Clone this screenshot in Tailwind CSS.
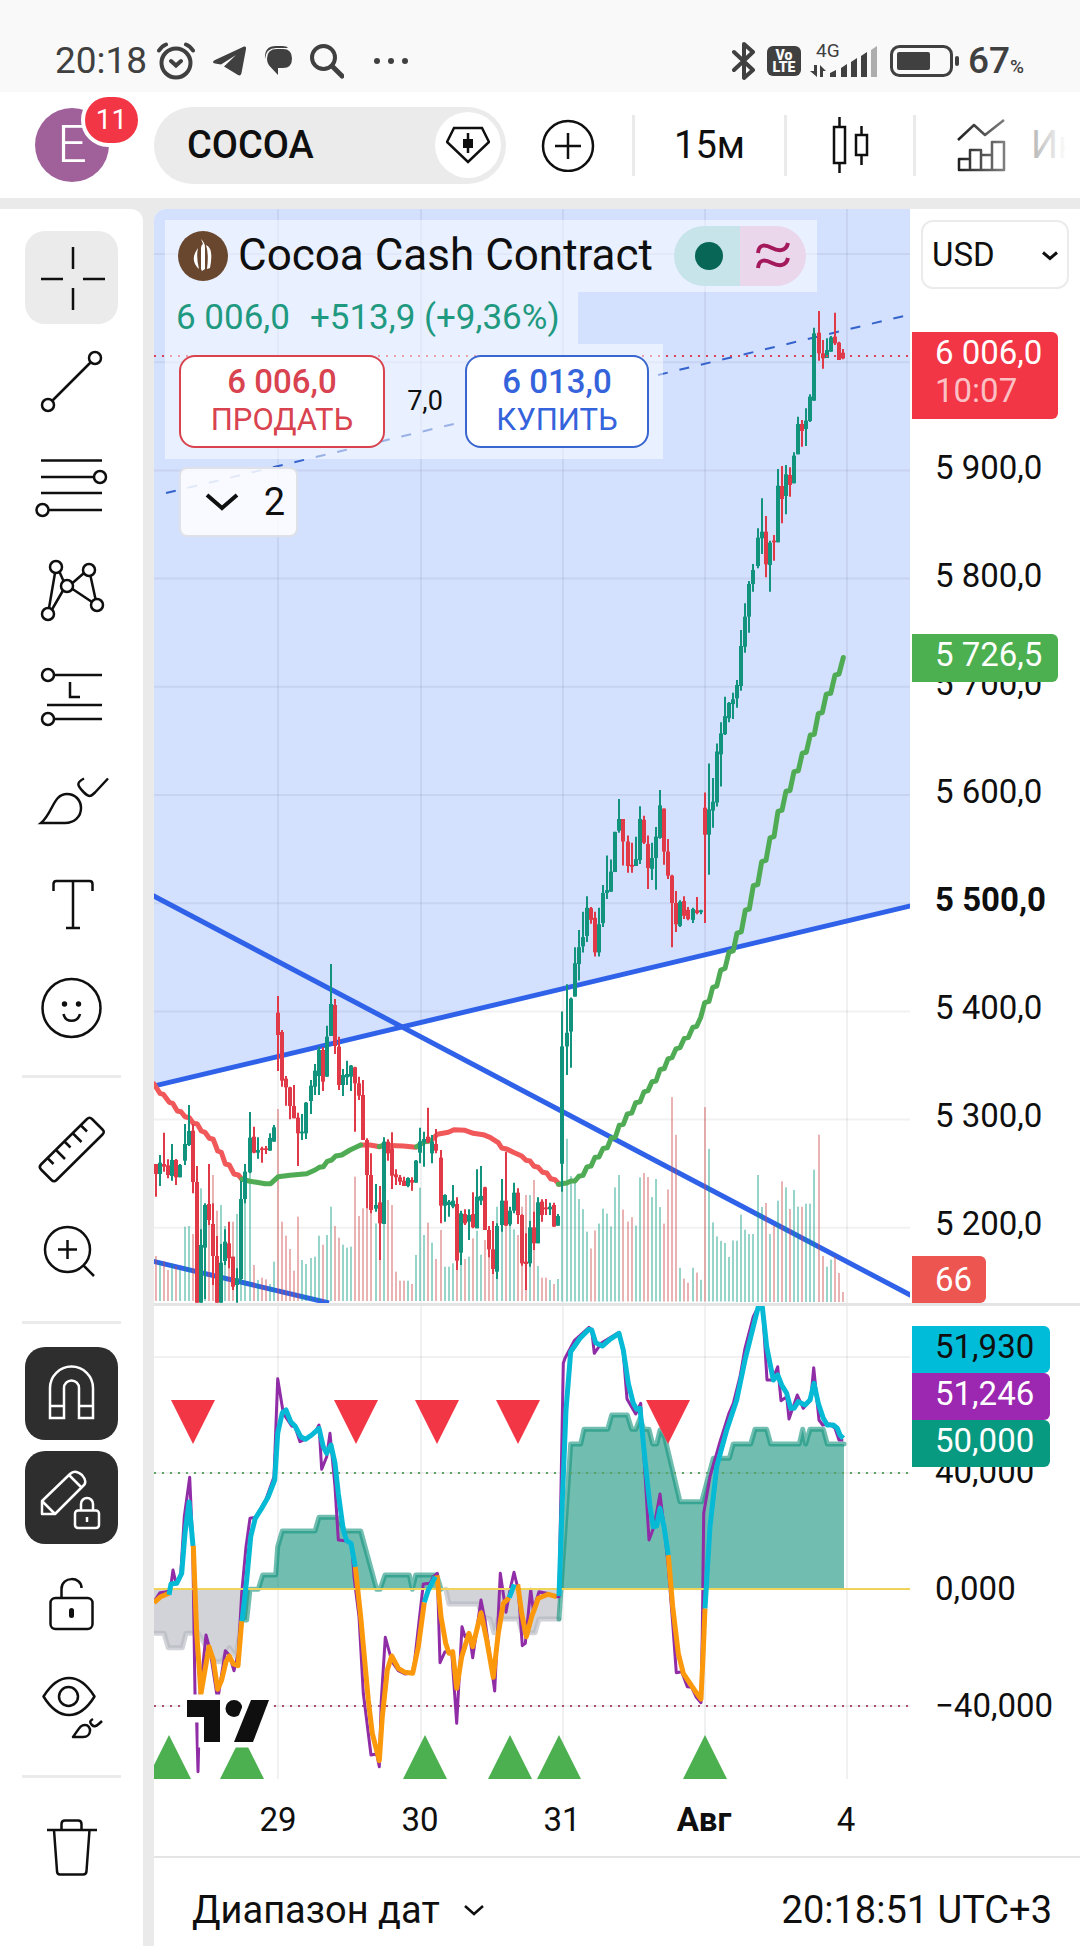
<!doctype html>
<html lang="ru">

  <head>
    <meta charset="UTF-8" />
    <meta name="viewport" content="width=device-width, initial-scale=1.0" />
    <title>COCOA 6 006,0</title>
    <script src="https://cdn.jsdelivr.net/npm/@tailwindcss/browser@4"></script>
  </head>

  <body class="min-h-screen flex flex-col bg-[#eaeaea] text-[#0f0f0f] font-['Roboto','Liberation_Sans',sans-serif] overflow-x-hidden">

    <!-- Phone status bar -->
    <div class="h-[92px] pt-[30px] pl-[55px] pr-14 flex items-center justify-between bg-[#f9f9f9] text-[#404040]">
      <div class="flex items-center gap-[18px]">
        <span class="text-[37px] leading-[60px] -mr-2">20:18</span>
        <svg class="w-[38px] h-[38px]" viewBox="0 0 38 38" fill="none" stroke="currentColor" stroke-width="4" stroke-linecap="round">
          <circle cx="19" cy="21" r="14.500" />
          <path d="M2 8.500Q5 4 9 2.500M36 8.500Q33 4 29 2.500M14 19l5 4.500 5-4.500" />
        </svg>
        <svg class="w-[33px] h-[30px]" viewBox="0 0 33 30" fill="currentColor">
          <path d="M0 16Q0 15 2 14L31 .5Q33.500 0 33 3L28.500 27Q28 30.500 25 29L11 20.500 23 9 8 18.500 2 17.500Q0 17 0 16Z" />
        </svg>
        <svg class="w-[28px] h-[30px]" viewBox="0 0 28 30" fill="currentColor">
          <path d="M13 3h6q9 0 9 9.500T19 22h-5v7L6.500 21Q3 18 3 12.500 3 3 13 3Z" />
          <path d="M1 13Q0 0 12 0h6q5 0 6 2H12Q2 2 1 13Z" />
        </svg>
        <svg class="w-[34px] h-[36px]" viewBox="0 0 34 36" fill="none" stroke="currentColor">
          <circle cx="13.500" cy="14.500" r="11.500" stroke-width="4" />
          <path d="M22 23l10 10" stroke-width="5" stroke-linecap="round" />
        </svg>
        <svg class="w-[34px] h-[8px] ml-3" viewBox="0 0 34 8" fill="currentColor">
          <circle cx="3" cy="4" r="3" /><circle cx="17" cy="4" r="3" /><circle cx="31" cy="4" r="3" />
        </svg>
      </div>
      <div class="flex items-center">
        <svg class="w-[24px] h-[40px]" viewBox="0 0 24 40" fill="none" stroke="currentColor" stroke-width="4" stroke-linejoin="round" stroke-linecap="round">
          <path d="M2 11l19 18-9 8V3l9 8L2 29" />
        </svg>
        <div class="ml-[11px] w-[34px] h-[30px] rounded-md bg-[#404040] text-[#f9f9f9] text-[14px] leading-[12px] font-black text-center pt-[3px]">Vo<br>LTE</div>
        <svg class="ml-[9px] w-[68px] h-[36px] overflow-visible" viewBox="0 0 68 36" fill="currentColor">
          <text x="6" y="14" font-size="19" font-family="Roboto">4G</text>
          <path d="M4 22h3v12L0 28h4zM10 34V22l6 6h-3v6z" />
          <path d="M20 30l6-3v7h-6zM31 25l6-4v13h-6zM41 19l6-4v19h-6zM51 13l6-4v25h-6z" />
          <path d="M61 7l6-4v31h-6z" class="text-[#adadad]" />
        </svg>
        <svg class="ml-3 w-[70px] h-[32px]" viewBox="0 0 70 32" fill="currentColor">
          <rect x="1.500" y="1.500" width="60" height="29" rx="8" fill="none" stroke="currentColor" stroke-width="3" />
          <rect x="7" y="7" width="33" height="18" rx="2" /><rect x="65" y="11" width="4" height="10" rx="2" />
        </svg>
        <span class="ml-2 text-[37px] leading-[60px] font-medium">67</span><span class="text-[19px] font-medium pt-3">%</span>
      </div>
    </div>

    <!-- Top toolbar -->
    <header class="relative h-[106px] flex items-center bg-white overflow-hidden [&>*]:shrink-0">
      <button class="relative ml-[35px] w-[74px] h-[74px] rounded-full bg-[#a0619b] text-white text-[52px] leading-[74px] font-light" aria-label="Профиль">E
        <span class="absolute left-[46px] -top-[15px] box-content w-[53px] h-[46px] border-4 border-white rounded-full bg-[#f23645] text-[28px] leading-[46px] font-normal">11</span>
      </button>
      <div class="ml-[45px] w-[352px] h-[77px] pl-[33px] pr-[5px] flex items-center justify-between rounded-full bg-[#ebebeb]">
        <button class="text-[38px] font-medium">COCOA</button>
        <button class="w-[66px] h-[66px] rounded-full bg-white flex items-center justify-center" aria-label="Инструмент">
          <svg class="w-[44px] h-[38px]" viewBox="0 0 44 38" fill="none" stroke="currentColor" stroke-width="2.500">
            <path d="M8 2h28l7 14-21 20L1 16z" /><path d="M22 7v20" /><path d="M17 13h10v9H17z" fill="currentColor" stroke="none" />
          </svg>
        </button>
      </div>
      <button class="ml-[35px] w-[54px] h-[54px]" aria-label="Сравнить">
        <svg viewBox="0 0 54 54" fill="none" stroke="currentColor" stroke-width="2.500"><circle cx="27" cy="28" r="25" /><path d="M14 28h26M27 15v26" /></svg>
      </button>
      <div class="ml-[37px] w-[3px] h-[61px] bg-[#eaeaea]"></div>
      <button class="w-[149px] text-[38px]">15м</button>
      <div class="w-[3px] h-[61px] bg-[#eaeaea]"></div>
      <button class="ml-[45px] w-[38px] h-[56px]" aria-label="Свечи">
        <svg viewBox="0 0 38 56" fill="none" stroke="currentColor" stroke-width="2.500"><path d="M2 10h11v36H2zM7.500 0v10M7.500 46v10M24 18h11v20H24zM29.500 9v9M29.500 38v10" /></svg>
      </button>
      <div class="ml-[43px] w-[3px] h-[61px] bg-[#eaeaea]"></div>
      <button class="ml-[41px] flex items-center gap-[25px] text-[38px] whitespace-nowrap">
        <svg class="w-[49px] h-[54px]" viewBox="0 0 49 54" fill="none" stroke="currentColor" stroke-width="2.500" stroke-linejoin="round">
          <path d="M1 22L17 7l11 10L47 2M2 52V41h11v11zM13 52V32h11v20zM24 52V37h11v15zM35 52V24h12v28z" />
        </svg>
        Индикаторы
      </button>
      <div class="absolute inset-y-0 right-0 w-[130px] bg-linear-to-r from-white/0 to-white to-90%"></div>
    </header>

    <div class="flex-1 flex gap-[11px] pt-[11px]">

      <!-- Drawing tools -->
      <nav id="tools" class="w-[143px] shrink-0 pt-[22px] flex flex-col items-center gap-[11px] rounded-tr-xl bg-white [&>button]:w-[93px] [&>button]:h-[93px] [&>button]:rounded-[20px] [&>hr]:w-[99px] [&>hr]:my-3 [&>hr]:border-t-0 [&>hr]:h-[3px] [&>hr]:bg-[#ebebeb]">
        <button class="bg-[#ebebeb]" aria-label="Перекрестие">
          <svg viewBox="0 0 93 93" fill="none" stroke="currentColor" stroke-width="2.500"><path d="M16 48h22M58 48h22M48 16v22M48 57v22" /></svg>
        </button>
        <button aria-label="Линия тренда">
          <svg viewBox="0 0 93 93" fill="none" stroke="currentColor" stroke-width="2.500"><circle cx="70" cy="23" r="6" /><circle cx="23" cy="70" r="6" /><path d="M27.500 65.500l38-38" /></svg>
        </button>
        <button aria-label="Фибоначчи">
          <svg viewBox="0 0 93 93" fill="none" stroke="currentColor" stroke-width="2.500"><path d="M16 21.500h61M16 38h53M16 54h61M24 71h53" /><circle cx="75" cy="38" r="6" /><circle cx="17.500" cy="71" r="6" /></svg>
        </button>
        <button aria-label="Паттерны">
          <svg viewBox="0 0 93 93" fill="none" stroke="currentColor" stroke-width="2.500"><circle cx="31" cy="24" r="6" /><circle cx="64" cy="27" r="6" /><circle cx="42" cy="43" r="6" /><circle cx="72" cy="62" r="6" /><circle cx="23" cy="71" r="6" /><path d="M30 30l-6 35M34.500 29l4 9M38 47.500L27 66.500M47.500 40L59 30M65.500 33l5 23M47.500 46L67 59" /></svg>
        </button>
        <button aria-label="Прогноз">
          <svg viewBox="0 0 93 93" fill="none" stroke="currentColor" stroke-width="2.500"><circle cx="23" cy="28" r="6" /><circle cx="23" cy="72" r="6" /><path d="M29 28h48M29 72h48M22 58h55M45 35v15h10" /></svg>
        </button>
        <button aria-label="Кисть">
          <svg viewBox="0 0 93 93" fill="none" stroke="currentColor" stroke-width="2.500"><path d="M16 72C28 62 28 43 42 43c8 0 14 6 14 14 0 9-7 15-16 15zM59 27.500c-8 4-7 7 0 14 5 5 7 4 11 0L83 27.500" /></svg>
        </button>
        <button aria-label="Текст">
          <svg viewBox="0 0 93 93" fill="none" stroke="currentColor" stroke-width="2.500"><path d="M28.500 36v-7q0-3 3-3h33q3 0 3 3v7M48 26v47M41 73h14" /></svg>
        </button>
        <button aria-label="Смайлы">
          <svg viewBox="0 0 93 93" fill="none" stroke="currentColor" stroke-width="2.500"><circle cx="46.500" cy="49" r="29" /><path d="M38.500 55c2 9 14 9 16.500 0" /><circle cx="39.500" cy="45" r="2.700" fill="currentColor" stroke="none" /><circle cx="53.500" cy="45" r="2.700" fill="currentColor" stroke="none" /></svg>
        </button>
        <hr />
        <button aria-label="Линейка">
          <svg viewBox="0 0 93 93" fill="none" stroke="currentColor" stroke-width="2.500" stroke-linejoin="round"><path d="M62 18q2.500-2.500 5 0l10.500 10.500q2.500 2.500 0 5L31.500 79q-2.500 2.500-5 0L16 68.500q-2.500-2.500 0-5zM22.500 57l6 6M31 49l9 9M39.500 40.500l6 6M47.500 32l9 9M56 24.500l6 6" /></svg>
        </button>
        <button aria-label="Увеличить">
          <svg viewBox="0 0 93 93" fill="none" stroke="currentColor" stroke-width="2.500"><circle cx="42.500" cy="44.500" r="22.500" /><path d="M33 44.500h19M42.500 35v19M58 60l11 11" /></svg>
        </button>
        <hr />
        <button class="bg-[#2e2e2e] text-white" aria-label="Магнит">
          <svg viewBox="0 0 93 93" fill="none" stroke="currentColor" stroke-width="2.500"><path d="M25 71V41a21.500 21.500 0 0143 0v30H54V41a7.500 7.500 0 00-15 0v30zM25 59h14M54 59h14" /></svg>
        </button>
        <button class="bg-[#2e2e2e] text-white" aria-label="Режим рисования">
          <svg viewBox="0 0 93 93" fill="none" stroke="currentColor" stroke-width="2.500" stroke-linejoin="round"><path d="M17 63V50l28-27q5-5 12 1 6 7 1 11L30 63zM17 50l13 13M44 24l12.500 12.500" /><rect x="50" y="59.500" width="24" height="17.500" rx="3" /><path d="M56 59v-6a6 6 0 0112 0v6M62 66v5" /></svg>
        </button>
        <button aria-label="Заблокировать">
          <svg viewBox="0 0 93 93" fill="none" stroke="currentColor" stroke-width="2.500"><rect x="25.500" y="43" width="42" height="31" rx="5" /><path d="M36.500 43v-9c0-13 20-13 20-1" /><rect x="44" y="53" width="5" height="10" rx="2.500" fill="currentColor" stroke="none" /></svg>
        </button>
        <button aria-label="Скрыть">
          <svg viewBox="0 0 93 93" fill="none" stroke="currentColor" stroke-width="2.500" stroke-linejoin="round"><path d="M18.500 37.500Q30 19 44 19t25.500 18.500Q58 56 44 56T18.500 37.500z" /><circle cx="43.500" cy="37.500" r="9.500" /><path d="M48 78c6-8 7-12 12-12 7 0 7 12-2 12zM68 60c-4 2-3 4-1 6s4 2 10-4" /></svg>
        </button>
        <hr />
        <button aria-label="Удалить">
          <svg viewBox="0 0 93 93" fill="none" stroke="currentColor" stroke-width="2.500"><path d="M22 29h50M36.500 29v-6q0-3.500 3.500-3.500h13q3.500 0 3.500 3.500v6M29 29l3 41q0 3.500 3 3.500h23q3.500 0 3.500-3.500l3-41" /></svg>
        </button>
      </nav>

      <main class="flex-1 min-w-0 flex flex-col rounded-tl-xl bg-white overflow-hidden">
        <div class="flex">

          <!-- Plot area -->
          <div class="relative flex-1 min-w-0">
            <svg id="chart" class="block w-full h-[1577px]" viewBox="0 0 756 1577" preserveAspectRatio="xMaxYMin slice"></svg>

            <!-- Legend -->
            <div class="absolute left-[11px] top-[11px] flex flex-col items-start [&>div]:bg-white/50">
              <div class="h-[72px] pl-[13px] pr-[11px] flex items-center">
                <svg class="w-[50px] h-[50px]" viewBox="0 0 50 50">
                  <circle cx="25" cy="25" r="25" fill="#69472f" />
                  <path d="M23 8q4 4 4 8v22l-3 2-1-2V18q0-4 2-5zM20 17q-2 9 1 21-10-9-1-21zM28 14q8 3 4 23l-3 1q2-15-1-24z" fill="#fff" />
                </svg>
                <h1 class="ml-[10px] pb-[2px] text-[44px] leading-[60px] whitespace-nowrap">Cocoa Cash Contract</h1>
                <div class="ml-[21px] flex h-[60px] rounded-full overflow-hidden">
                  <span class="w-[66px] bg-[#c7e4ea] flex items-center justify-center pl-1"><i class="w-7 h-7 rounded-full bg-[#076656]"></i></span>
                  <span class="w-[66px] bg-[#ead7ec] flex items-center justify-center">
                    <svg class="w-[34px] h-[28px]" viewBox="0 0 34 28" fill="none" stroke="#a3195b" stroke-width="4"><path d="M2 11C3 1 10 3 16 6s14 4 16-5M2 26C3 16 10 18 16 21s14 4 16-5" /></svg>
                  </span>
                </div>
              </div>
              <div class="h-[52px] pl-[11px] pr-[18px] flex items-center gap-[20px] text-[35px] text-[#1f9a80] whitespace-nowrap">
                <span>6 006,0</span><span>+513,9 (+9,36%)</span>
              </div>
              <div class="h-[115px] pl-[14px] pr-[14px] pt-[11px] flex items-start">
                <button class="w-[206px] h-[93px] pb-[2px] border-2 border-[#d8434f] rounded-2xl bg-white text-[#d8434f] leading-[38px]">
                  <b class="block text-[33px] font-medium">6 006,0</b><span class="block text-[31px]">ПРОДАТЬ</span>
                </button>
                <span class="w-[80px] leading-[93px] text-center text-[27px]">7,0</span>
                <button class="w-[184px] h-[93px] pb-[2px] border-2 border-[#3a66cf] rounded-2xl bg-white text-[#3563dc] leading-[38px]">
                  <b class="block text-[33px] font-medium">6 013,0</b><span class="block text-[31px]">КУПИТЬ</span>
                </button>
              </div>
              <button class="ml-[14px] mt-[8px] w-[119px] h-[70px] pl-[24px] pr-[11px] flex items-center justify-between border-2 border-[#dfe1e8] rounded-lg bg-white/85 text-[38px]">
                <svg class="w-[34px] h-[20px]" viewBox="0 0 34 20" fill="none" stroke="currentColor" stroke-width="4"><path d="M2 3l15 13L32 3" /></svg>
                2
              </button>
            </div>
          </div>

          <!-- Price scale -->
          <div class="w-[170px] shrink-0 text-[33px] leading-[48px] whitespace-nowrap">
            <div class="relative h-[1097px] border-b-[3px] border-[#e4e4e4] pt-[11px]">
              <div class="relative mx-[11px]">
                <select class="w-full h-[69px] pl-[9px] border-2 border-[#ebebeb] rounded-xl bg-white appearance-none" aria-label="Валюта"><option>USD</option></select>
                <svg class="absolute right-[11px] top-[31px] w-[16px] h-[10px]" viewBox="0 0 16 10" fill="none" stroke="currentColor" stroke-width="3"><path d="M1 1.500l7 6 7-6" /></svg>
              </div>
              <ul class="pt-[125px] pl-[25px] [&>li]:leading-[108px]">
                <li>5 900,0</li>
                <li>5 800,0</li>
                <li>5 700,0</li>
                <li>5 600,0</li>
                <li class="font-bold">5 500,0</li>
                <li>5 400,0</li>
                <li>5 300,0</li>
                <li>5 200,0</li>
              </ul>
              <div class="absolute left-[2px] top-[123px] w-[146px] h-[87px] pl-[23px] pt-[2px] leading-[38px] rounded-r-md bg-[#f23645] text-white">6 006,0<br><span class="text-white/70">10:07</span></div>
              <div class="absolute left-[2px] top-[425px] w-[146px] h-[48px] pl-[23px] leading-[42px] rounded-r-md bg-[#4caf50] text-white">5 726,5</div>
              <div class="absolute left-[2px] bottom-0 w-[74px] h-[47px] pl-[23px] rounded-r-md bg-[#ec5550] text-white">66</div>
            </div>
            <div class="relative">
              <ul class="pt-[107px] pl-[25px] [&>li]:leading-[117px]">
                <li>40,000</li>
                <li>0,000</li>
                <li>−40,000</li>
              </ul>
              <div class="absolute left-[2px] top-[20px] w-[138px] leading-[42px] [&>div]:h-[47px] [&>div]:pl-[23px] [&>div]:rounded-r-md text-white">
                <div class="bg-[#00bcd9] text-[#0f0f0f]">51,930</div>
                <div class="bg-[#9c27b0]">51,246</div>
                <div class="bg-[#089981]">50,000</div>
              </div>
            </div>
          </div>
        </div>

        <!-- Time scale -->
        <div class="h-[72px] pl-[53px] flex text-[33px] leading-[68px] text-center overflow-hidden border-b-2 border-[#e4e4e4] [&>span]:w-[142px]">
          <span>29</span><span>30</span><span>31</span><span class="font-bold">Авг</span><span>4</span>
        </div>
        <footer class="h-[88px] pt-4 pl-[38px] pr-7 flex items-center justify-between text-[38px] whitespace-nowrap">
          <button class="flex items-center gap-6">Диапазон дат
            <svg class="w-[20px] h-[12px]" viewBox="0 0 20 12" fill="none" stroke="currentColor" stroke-width="2.500"><path d="M1 2l9 8 9-8" /></svg>
          </button>
          <button>20:18:51 UTC+3</button>
        </footer>
      </main>
    </div>

    <script>
      const UP = '#12937d', DOWN = '#e03a49';
      const TOP = 209;
      const out = [];
      const barX = i => 124 + (i - 30) * 4.064;
      const add = s => out.push(s);

      // candles: direction, high, body top, body bottom, low, volume top
      // each block has its own vertical origin and scale
      const blocks = [
        { oy: 940, k: 3, base: 1083, bars: `
          r 672 672 702 770 948|g 645 668 702 738 968|r 578 672 680 695 963|r 658 676 705 715 990|g 612 660 708 722 970
          r 657 660 712 735 978|g 672 675 712 712 988|g 552 612 662 675 860|g 495 573 615 618 858|r 552 572 726 760 882
          r 678 726 1088 1088 760|g 868 915 1088 1088 745|g 790 795 923 1077 800|r 672 792 840 855 780|r 790 852 948 1035 705
          r 888 948 1088 1088 812|g 912 968 1088 1088 795|g 868 905 963 975 858|r 845 910 955 985 870|r 950 950 1040 1050 845
          g 985 1015 1035 1088 822|g 722 777 1017 1022 750|g 672 695 777 790 780|g 516 593 697 700 645|r 560 590 638 640 975
          g 592 630 638 656 1020|r 620 625 630 668 1013|r 618 625 630 642 1018|g 580 594 632 632 1032|g 555 562 605 605 965
          r 168 218 285 393 507|r 270 276 422 440 845|r 408 416 442 497 887|r 440 442 498 538 927|r 435 498 535 535 992
          r 518 533 580 678 830|g 522 575 580 600 960|g 486 488 580 597 972|g 420 437 483 522 954|g 372 392 440 465 950
          g 320 330 408 465 887|r 322 330 425 453 914|g 257 290 410 410 885|g 72 192 288 288 800|r 177 195 318 342 858
          r 290 320 435 450 893|g 387 405 435 468 914|g 362 402 412 435 923|g 375 377 410 453 920|r 380 382 430 575 710
          r 410 430 467 480 828|r 420 465 600 600 805|r 595 600 705 805 780|r 640 705 810 820 815|g 732 795 806 815 850
          r 738 787 850 960 790|g 592 605 852 852 780|r 598 605 640 662 780|r 577 625 707 747 795|r 688 703 712 735 995
          r 705 712 725 735 1022|r 710 722 738 738 1022|g 712 714 738 742 1022|r 712 720 728 752 1032|g 660 662 728 728 945
          g 563 605 638 670 743|g 575 597 607 680 885|r 503 590 607 610 848|g 585 605 640 670 908|r 567 612 632 640 957
          r 630 653 797 850 870|g 763 765 797 845 980|g 780 785 795 830 980|g 735 782 800 805 970|r 772 792 962 990 960
          g 812 820 938 975 945|r 808 822 850 855 957|g 808 825 845 900 950|r 757 822 862 865 895|g 688 770 865 865 872
          g 678 768 782 795 944|r 740 742 870 870 900|r 858 870 928 952 860|r 843 928 987 1002 843|g 850 858 995 1017 800
          g 717 782 855 875 850|r 635 782 857 857 840|g 800 812 853 858 855|g 728 758 812 820 868|r 745 758 825 852 885
          r 823 825 970 977 800|r 880 965 972 1050 765|g 843 862 970 980 765|r 815 862 910 930 720|g 772 787 910 910 978
          r 778 785 825 845 1013|r 777 802 808 825 1013|g 788 800 808 825 1020|r 788 795 860 860 1032|g 822 828 857 857 1017` },
        { oy: 680, k: 2.489, base: 1547, bars: `
          g 825 912 1204 1274 1100|g 757 878 912 983 1142|g 790 793 875 965 1235|g 665 705 788 788 1245|g 622 665 707 748 1292
          g 577 640 663 678 1317|g 538 567 637 652 1373|r 565 568 597 607 1415|r 577 592 678 688 1370|g 567 608 678 688 1353
          g 510 530 605 615 1316|g 437 523 530 545 1328|g 447 477 527 527 1360|g 378 378 478 478 1263|g 296 346 375 380 1232
          r 346 346 402 462 1318|r 387 402 463 480 1348|r 405 460 465 480 1337|g 390 446 463 463 1358|g 314 346 448 458 1238
          r 338 348 405 408 1227|r 387 408 468 520 1237|g 405 443 470 498 1287|g 366 390 443 522 1242|g 274 312 393 395 1312
          r 320 320 427 460 1353|r 396 427 487 495 1268|r 485 487 555 665 1038|r 525 555 608 627 1132|g 548 552 612 615 1463
          r 538 550 587 595 1490|r 565 572 595 598 1500|g 567 570 597 605 1463|r 540 573 580 583 1475|g 572 573 578 583 1493
          r 280 318 385 605 1063|g 208 322 385 485 1167|g 244 303 325 368 1350|g 158 178 305 315 1385|g 105 133 185 265 1396
          g 42 90 135 137 1401|g 55 57 95 105 1436|g 32 48 60 97 1395` },
        { oy: 280, k: 3, base: 3066, bars: `
          g 1200 1215 1255 1283 2882|g 1050 1098 1218 1232 2804|g 970 1010 1100 1118 2849|g 903 912 1010 1058 2862|g 852 870 912 935 2862
          g 745 773 858 865 2685|g 655 755 775 822 2781|r 708 755 853 892 2769|g 782 788 855 935 2862|r 765 782 787 842 2837
          g 567 617 787 787 2762|r 558 618 657 730 2704|g 555 583 648 703 2722|r 562 585 615 650 2787|g 517 527 610 610 2730
          g 410 432 523 523 2780|r 420 432 453 500 2780|g 385 422 447 498 2771|g 343 350 423 426 2771|g 143 160 362 362 2669
          r 93 158 220 242 2564|r 180 220 235 266 2928|g 175 210 234 234 2960|g 168 172 215 215 2939|r 98 170 190 195 2930
          r 185 188 240 240 2979|r 207 218 235 238 3036` }
      ];

      // shaded zone and grid
      add('<path d="M0 0H756V697L0 877Z" fill="#d3e0fe"/>');
      add('<g stroke="#000" stroke-opacity=".055" stroke-width="2">');
      for (let y = 45; y < 1090; y += 108.2) add(`<path d="M0 ${y}H756"/>`);
      [1148, 1264, 1497].forEach(y => add(`<path d="M0 ${y}H756"/>`));
      [124, 267, 409, 551, 693].forEach(x => add(`<path d="M${x} 0V1570"/>`));
      add('</g>');

      // trend lines
      add('<clipPath id="price"><path d="M0 0H756V1094H0Z"/></clipPath><clipPath id="osc"><path d="M0 1097H756V1577H0Z"/></clipPath>');
      add('<g clip-path="url(#price)"><g stroke="#2f62e8" stroke-width="5"><path d="M-2 686L758 1087M-2 877.500L758 696.500M-2 1052L175 1094"/></g>');
      add('<path d="M12 284L754 106" stroke="#3563cc" stroke-width="2" stroke-dasharray="10 12"/>');

      const candles = [];
      let i = 0;
      for (const b of blocks) {
        const Y = v => b.oy - TOP + v / b.k;
        for (const row of b.bars.trim().split(/\||\n/)) {
          const [d, h, t, bt, l, v] = row.trim().split(' ');
          const c = d === 'g' ? UP : DOWN, x = Math.round(barX(i++));
          add(`<rect x="${x - 1}" y="${Y(+v)}" width="2" height="${Y(b.base) - Y(+v)}" fill="${d === 'g' ? '#089981' : '#cc4a4a'}" opacity=".42"/>`);
          candles.push(`<path d="M${x} ${Y(+h)}V${Y(+l)}" stroke="${c}" stroke-width="2"/><path d="M${x} ${Y(+t)}V${Math.max(Y(+bt), Y(+t) + 1.5)}" stroke="${c}" stroke-width="4"/>`);
        }
      }

      // polyline from "x,y x,y" with its own origin and scale
      const map = (s, ox, oy, kx, ky) => s.trim().split(/\s+/).map(p => {
        const [x, y] = p.split(',').map(Number);
        return (ox + x / kx).toFixed(1) + ',' + (oy + y / ky).toFixed(1);
      }).join(' ');
      const line = (pts, color, w, extra = '') => add(`<polyline points="${pts}" fill="none" stroke="${color}" stroke-width="${w}" stroke-linejoin="round" ${extra}/>`);

      // moving average
      const ma = (s, c) => line(map(s, -4, 731, 3, 3), c, 5, 'stroke-linecap="round"');
      const RED = '#f0585a', GREEN = '#4fac54';
      ma('12,432 30,460 40,463 58,487 68,490 82,513 93,515 105,530 118,533 130,550 142,552 154,573 165,577 178,595 190,598 203,633 214,637 226,672 238,675 252,702 265,705 276,718', RED);
      ma('632,615 660,615 690,620', RED);
      ma('700,616 760,618 798,622', RED);
      ma('845,600 862,583 895,577 912,569 945,571 970,580 1000,584 1020,592 1045,608 1055,624 1070,627 1090,637 1115,648 1128,661 1140,663 1152,679 1165,682 1178,697 1190,699 1202,716 1215,719 1228,733', RED);
      ma('276,718 300,724 320,727 345,731 362,731 385,710 420,706 470,701 495,690 508,682 520,680 532,664 545,660 557,648 575,645 600,630 632,615', GREEN);
      ma('688,620 697,617', GREEN);
      ma('800,620 825,605 838,603', GREEN);
      line(map(`55,1255 80,1252 93,1247 105,1247 117,1235 129,1233 141,1212 153,1210 165,1188 177,1187 189,1166 202,1164 214,1140 226,1138
        238,1108 250,1106 262,1080 275,1078 287,1052 300,1050 312,1025 324,1022 336,1000 348,998 360,970 373,967 384,943 396,940 408,918
        420,915 433,892 445,890 458,865 470,862 482,840 494,803 507,800 518,765 530,762 542,722 555,718 567,677 580,674 591,630 604,627
        616,573 628,570 640,512 653,509 665,452 678,449 690,393 702,390 714,327 726,324 738,277 750,275 762,228 775,226 787,182 799,180
        811,137 823,135 835,84 847,81 859,35 872,33 885,-12 897,-15 910,-56`, 386, 471, 3, 2.489), GREEN, 5, 'stroke-linecap="round"');

      candles.forEach(add);
      add('<path d="M0 147H756" stroke="#d9425a" stroke-width="2" stroke-dasharray="2 6"/></g>');

      // oscillator; left and right halves share one vertical scale
      const L = s => map(s, -4, 1091, 3, 3), R = s => map(s, 386, 1091, 3, 3);
      const area = (pts, color, op) => {
        const a = pts.split(' '), x0 = a[0].split(',')[0], x1 = a[a.length - 1].split(',')[0];
        add(`<polygon points="${x0},1380 ${pts} ${x1},1380" fill="${color}" opacity="${op}"/>`);
        line(pts, color, 5, `opacity="${op}" stroke-linecap="round"`);
      };
      add('<g clip-path="url(#osc)">');
      area(L('12,1000 42,1000 55,1043 97,1043 108,1000 145,1000 195,1085 215,1085 238,1043 258,1070 275,960'), '#b2b5be', .6);
      area(L('887,868 897,912 985,912 997,950 1020,957 1032,998 1044,957 1105,957 1117,998 1155,998 1167,957 1227,957'), '#b2b5be', .6);
      area(L('275,960 290,960 300,868 325,868 338,825 377,825 383,740 397,693 495,693 507,652 560,652 585,693 632,693 680,868 690,868 705,825 778,825 787,868 797,825 860,825 873,868'), UP, .6);
      area(R('57,957 92,432 122,432 132,388 203,388 215,345 262,345 275,388 287,388 300,355 312,388 327,388 338,432 350,432 360,390 375,415 420,605 485,605 520,475 568,475 580,432 632,432 645,388 680,388 692,432 778,432 788,388 797,432 810,388 850,388 862,432 912,432'), UP, .6);
      add('<path d="M0 1264H756" stroke="#5aa564" stroke-width="2" stroke-dasharray="2 6"/><path d="M0 1497H756" stroke="#a8506a" stroke-width="2" stroke-dasharray="2 6"/>');

      // raw line
      line(L(`12,905 30,878 50,875 62,860 69,810 78,850 92,825 103,650 119,532 128,735 135,1180 140,1270 144,1415 150,1180 168,1005
        180,1050 203,1200 226,1052 238,1065 252,1112 265,1060 275,880 288,740 300,655 318,652 335,620 348,598 372,530 383,236 400,340
        425,378 435,380 450,425 470,415 495,398 507,375 515,508 530,470 540,400 555,560 565,720 585,722 605,733 612,830 627,950 640,1180
        663,1365 680,1362 688,1400 694,1200 706,1012 726,1085 745,1112 765,1122 790,1118 803,1000 820,852 840,850 850,830 862,820 870,1088
        885,1055 905,1055 920,1270 936,980 945,1010 958,1000 968,1073 993,900 1005,960 1034,1173 1051,820 1068,937 1080,870 1092,817
        1105,870 1117,1037 1126,1030 1142,868 1150,930 1167,875 1190,880 1222,890`) + ' ' +
        R(`57,890 70,190 75,175 103,122 147,82 155,90 163,160 185,128 237,97 250,160 261,297 287,342 302,310 327,720 342,680 360,582
        372,680 385,800 398,970 409,1118 425,1115 442,1160 455,1162 468,1190 483,1208 487,1000 491,640 510,530 540,425 567,340 580,310
        600,230 615,145 640,50 655,20 668,30 681,240 697,240 713,200 723,302 740,290 747,357 772,285 790,325 812,300 821,203 837,360
        848,375 870,372 885,385 897,420 910,420`), '#8f2ca6', 3);
      add('<path d="M0 1380H756" stroke="#f0d45a" stroke-width="2"/>');

      // smoothed line
      const CY = '#06bad6', OR = '#fb980c';
      [
        [OR, L('12,908 32,890 57,880')],
        [OR, L('130,737 140,1000 153,1180 165,1110 177,1040 190,1080 203,1168 215,1140 228,1085 238,1068 250,1092 264,1097 275,962')],
        [OR, L('616,800 632,950 655,1200 667,1300 688,1382 697,1250 712,1110 725,1068 745,1105 765,1117 788,1120 805,1040 823,907')],
        [OR, L('861,826 873,950 887,1030 897,1060 908,1055 920,1165 935,1070 957,1000 968,1040 993,938 1010,1020 1030,1132 1045,1000 1060,910 1078,893')],
        [OR, L('1103,853 1115,940 1129,1010 1145,950 1165,895 1195,883 1220,890')],
        [OR, R('385,765 398,920 415,1060 430,1120 450,1150 470,1180 483,1197 490,1050 495,925')],
        [CY, L('57,884 63,852 80,850 95,820 105,700 117,606 129,737')],
        [CY, L('276,964 290,840 302,710 316,655 337,622 355,590 374,540 383,400 397,338 408,330 422,365 435,378 452,410 466,418 485,405 507,385 520,440 530,460 543,435 555,490 565,580 580,690 590,722 603,730 616,800')],
        [CY, L('823,907 835,870 856,830')],
        [CY, L('1078,893 1093,853')],
        [CY, R('57,888 65,650 78,330 92,155 120,115 147,88 155,90 167,128 187,138 210,118 237,100 250,150 265,250 280,310 290,328 300,325 315,480 330,620 340,680 350,678 360,625 372,680 385,765')],
        [CY, R('495,925 510,680 530,500 560,390 590,300 615,180 640,80 655,20 667,20 680,140 700,240 713,225 725,255 740,280 752,325 762,325 775,305 795,315 810,300 822,250 835,310 850,355 862,375 880,375 892,385 900,405 910,415')]
      ].forEach(([c, p]) => line(p, c, 5));

      // signals
      [39, 202, 283, 364, 514].forEach(x => add(`<path d="M${x - 22} 1191h44l-22 44Z" fill="#f23645"/>`));
      [15, 88, 271, 356, 405, 551].forEach(x => add(`<path d="M${x - 22} 1570h44l-22 -44Z" fill="#4caf50"/>`));

      // logo
      add('<g fill="#0f0f0f" stroke="#fff" stroke-width="11" paint-order="stroke"><path d="M33 1491H66V1533H50V1508H33Z"/><circle cx="80" cy="1499.500" r="8.500"/><path d="M97 1491H115L99 1533H80Z"/></g>');
      add('</g><path d="M0 1095.500H756" stroke="#e4e4e4" stroke-width="3"/>');

      document.getElementById('chart').innerHTML = out.join('');
    </script>
  </body>

</html>
